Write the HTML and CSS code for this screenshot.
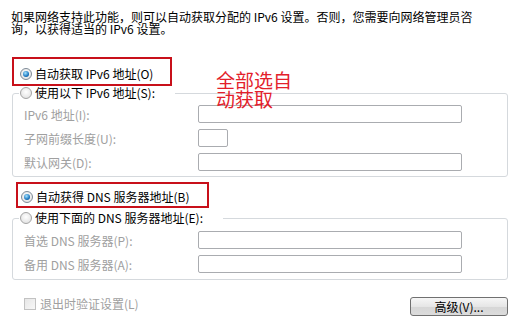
FILE: index.html
```html
<!DOCTYPE html>
<html lang="zh-CN">
<head>
  <meta charset="UTF-8">
  <title>IPv6 属性</title>
  <link rel="stylesheet" href="styles.css">
</head>
<body>

  <div class="dialog">
    <p class="intro">如果网络支持此功能，则可以自动获取分配的 IPv6 设置。否则，您需要向网络管理员咨<br>询，以获得适当的 IPv6 设置。</p>

    <div class="mark mark-ip">
      <label class="opt"><span class="radio on"></span>自动获取 IPv6 地址(O)</label>
    </div>

    <fieldset class="group">
      <legend><label class="opt"><span class="radio"></span>使用以下 IPv6 地址(S):</label></legend>
      <div class="row"><span class="lbl">IPv6 地址(I):</span><span class="field"></span></div>
      <div class="row"><span class="lbl">子网前缀长度(U):</span><span class="field short"></span></div>
      <div class="row"><span class="lbl">默认网关(D):</span><span class="field"></span></div>
    </fieldset>

    <div class="mark mark-dns">
      <label class="opt"><span class="radio on"></span>自动获得 DNS 服务器地址(B)</label>
    </div>

    <fieldset class="group group-dns">
      <legend><label class="opt"><span class="radio"></span>使用下面的 DNS 服务器地址(E):</label></legend>
      <div class="row"><span class="lbl">首选 DNS 服务器(P):</span><span class="field"></span></div>
      <div class="row"><span class="lbl">备用 DNS 服务器(A):</span><span class="field"></span></div>
    </fieldset>

    <div class="footer">
      <label class="check"><span class="box"></span>退出时验证设置(L)</label>
      <button class="btn">高级(V)...</button>
    </div>

    <div class="note">全部选自<br>动获取</div>
  </div>

</body>
</html>
```

FILE: styles.css
```css
body {
  margin: 0;
  background: #fff;
  font-family: "Noto Sans CJK SC", "Noto Sans", sans-serif;
  font-size: 12px;
  color: #000;
}

.dialog {
  position: relative;
  width: 519px;
  height: 327px;
}

.intro {
  margin: 11px 0 0 11px;
  line-height: 12px;
}

.opt {
  display: flex;
  align-items: center;
  height: 14px;
  line-height: 14px;
  white-space: nowrap;
}

.radio {
  position: relative;
  width: 12px;
  height: 12px;
  margin-right: 3px;
  box-sizing: border-box;
  border: 1px solid #a4a4a4;
  border-radius: 50%;
  background: radial-gradient(circle at 50% 40%, #fff, #dcdcdc);
}

.radio.on {
  border-color: #7d8a96;
}

.radio.on::after {
  content: "";
  position: absolute;
  top: 2px;
  left: 2px;
  right: 2px;
  bottom: 2px;
  border-radius: 50%;
  background: radial-gradient(circle at 40% 35%, #a6e4ff, #1d78c0 60%, #0c3f75);
}

/* red annotation boxes */
.mark {
  box-sizing: border-box;
  border: 2px solid #c8101a;
}

.mark-ip {
  width: 160px;
  height: 29px;
  margin: 22px 0 0 12px;
  padding: 8px 0 0 6px;
}

.mark-dns {
  width: 193px;
  height: 26px;
  margin: 5px 0 0 16px;
  padding: 6px 0 0 3px;
}

.group {
  width: 496px;
  box-sizing: border-box;
  margin: 0 0 0 12px;
  padding: 5px 0 5px;
  border: 1px solid #d5d9dd;
  border-radius: 3px;
}

.group legend {
  margin-left: 6px;
  padding: 0 20px 0 1px;
}

.group-dns {
  margin-top: 3px;
  padding-top: 6px;
  padding-bottom: 6px;
}

.row {
  display: flex;
  align-items: center;
  height: 18px;
  padding-left: 11px;
  margin-bottom: 6px;
  color: #a0a0a0;
}

.row:last-child {
  margin-bottom: 0;
}

.lbl {
  width: 174px;
}

.field {
  width: 264px;
  height: 18px;
  box-sizing: border-box;
  border: 1px solid #aaacb0;
  border-radius: 2px;
  background: #fff;
}

.field.short {
  width: 30px;
}

.footer {
  display: flex;
  justify-content: space-between;
  align-items: flex-start;
  width: 496px;
  margin: 17px 0 0 12px;
}

.check {
  display: flex;
  align-items: center;
  height: 13px;
  padding-left: 12px;
  color: #a0a0a0;
}

.box {
  width: 12px;
  height: 12px;
  margin-right: 4px;
  box-sizing: border-box;
  border: 1px solid #c2c2c2;
  background: linear-gradient(135deg, #e6e6e6, #f8f8f8);
}

.btn {
  width: 98px;
  height: 19px;
  padding: 0;
  border: 1px solid #707070;
  border-radius: 3px;
  background: linear-gradient(#f6f6f6, #e6e6e6 50%, #d6d6d6 51%, #dcdcdc);
  font-family: inherit;
  font-size: 12px;
  line-height: 17px;
  color: #000;
}

.note {
  position: absolute;
  left: 216px;
  top: 59px;
  font-size: 19px;
  line-height: 19px;
  color: #e3202a;
}
```
